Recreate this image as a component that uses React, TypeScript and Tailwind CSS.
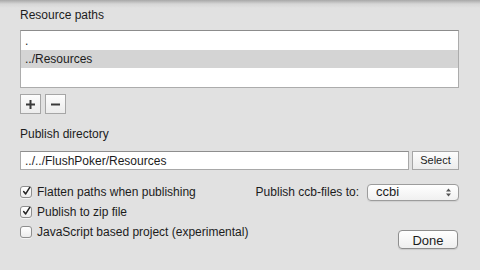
import { useState } from 'react';

function Checkbox({ checked, label }: { checked: boolean; label: string }) {
  return (
    <div className="flex h-[20px] items-center gap-[5px]">
      <div className="flex h-[12px] w-[12px] items-center justify-center rounded-[3px] border border-[#8e8e8e] bg-[linear-gradient(to_bottom,#ffffff,#ececec)] shadow-[0_1px_0_rgba(255,255,255,0.6)]">
        {checked && (
          <svg width="11" height="11" viewBox="0 0 11 11" className="-mt-[2px] ml-[1px]">
            <path d="M2 5.5 L4.5 8.5 L9.5 0.5" fill="none" stroke="#222" strokeWidth="1.8" strokeLinecap="round" strokeLinejoin="round" />
          </svg>
        )}
      </div>
      <span>{label}</span>
    </div>
  );
}

function SquareButton({ children }: { children: React.ReactNode }) {
  return (
    <button className="flex h-[20px] w-[21px] items-center justify-center border border-[#a6a6a6] bg-[linear-gradient(to_bottom,#fdfdfd,#ececec)]">
      {children}
    </button>
  );
}

export default function App() {
  const [paths] = useState(['.', '../Resources']);

  return (
    <div className="flex h-[270px] w-[480px] flex-col bg-[linear-gradient(to_bottom,#a8a8a8_0px,#d6d6d6_4px,#e1e1e1_8px,#e1e1e1_100%)] pl-[20px] pr-[21px] pt-[8px] font-['Liberation_Sans',Arial,sans-serif] text-[12px] text-[#1c1c1c]">
      <div className="h-[14px] leading-[14px]">Resource paths</div>

      <div className="mt-[8px] flex h-[58px] flex-col border border-[#acacac] border-t-[#8c8c8c] bg-white">
        <div className="flex h-[19px] items-center pl-[4px]">{paths[0]}</div>
        <div className="flex h-[18px] items-center bg-[#d4d4d4] pl-[4px]">{paths[1]}</div>
      </div>

      <div className="mt-[6px] flex gap-[4px]">
        <SquareButton>
          <svg width="9" height="9" viewBox="0 0 9 9">
            <path d="M4.5 0 V9 M0 4.5 H9" stroke="#3a3a3a" strokeWidth="2" />
          </svg>
        </SquareButton>
        <SquareButton>
          <svg width="9" height="9" viewBox="0 0 9 9">
            <path d="M0 4.5 H9" stroke="#3a3a3a" strokeWidth="2" />
          </svg>
        </SquareButton>
      </div>

      <div className="mt-[13px] h-[14px] leading-[14px]">Publish directory</div>

      <div className="mt-[10px] flex h-[19px] gap-[3px]">
        <div className="flex flex-1 items-center border border-[#a8a8a8] border-t-[#8e8e8e] bg-white pl-[4px]">
          ../../FlushPoker/Resources
        </div>
        <button className="w-[47px] border border-[#a6a6a6] bg-[linear-gradient(to_bottom,#fdfdfd,#ececec)] text-[11px]">
          Select
        </button>
      </div>

      <div className="mt-[12px] flex">
        <div className="flex flex-1 flex-col">
          <Checkbox checked label="Flatten paths when publishing" />
          <Checkbox checked label="Publish to zip file" />
          <Checkbox checked={false} label="JavaScript based project (experimental)" />
        </div>
        <div className="flex flex-col items-end">
          <div className="flex h-[20px] items-center gap-[8px]">
            <span>Publish ccb-files to:</span>
            <div className="flex h-[17px] w-[92px] items-center justify-between rounded-[4px] border border-[#9c9c9c] bg-[linear-gradient(to_bottom,#ffffff,#f0f0f0)] pl-[8px] pr-[7px] text-[13px] shadow-[0_1px_1px_rgba(0,0,0,0.08)]">
              <span>ccbi</span>
              <svg width="5" height="9" viewBox="0 0 5 9">
                <path d="M0 3.5 L2.5 0.5 L5 3.5 Z M0 5.5 L2.5 8.5 L5 5.5 Z" fill="#555" />
              </svg>
            </div>
          </div>
          <button className="mr-[1px] mt-[28px] h-[19px] w-[60px] rounded-[4px] border border-[#8e8e8e] bg-[linear-gradient(to_bottom,#ffffff,#efefef)] text-[13px] shadow-[0_1px_1px_rgba(0,0,0,0.1)]">
            Done
          </button>
        </div>
      </div>
    </div>
  );
}
